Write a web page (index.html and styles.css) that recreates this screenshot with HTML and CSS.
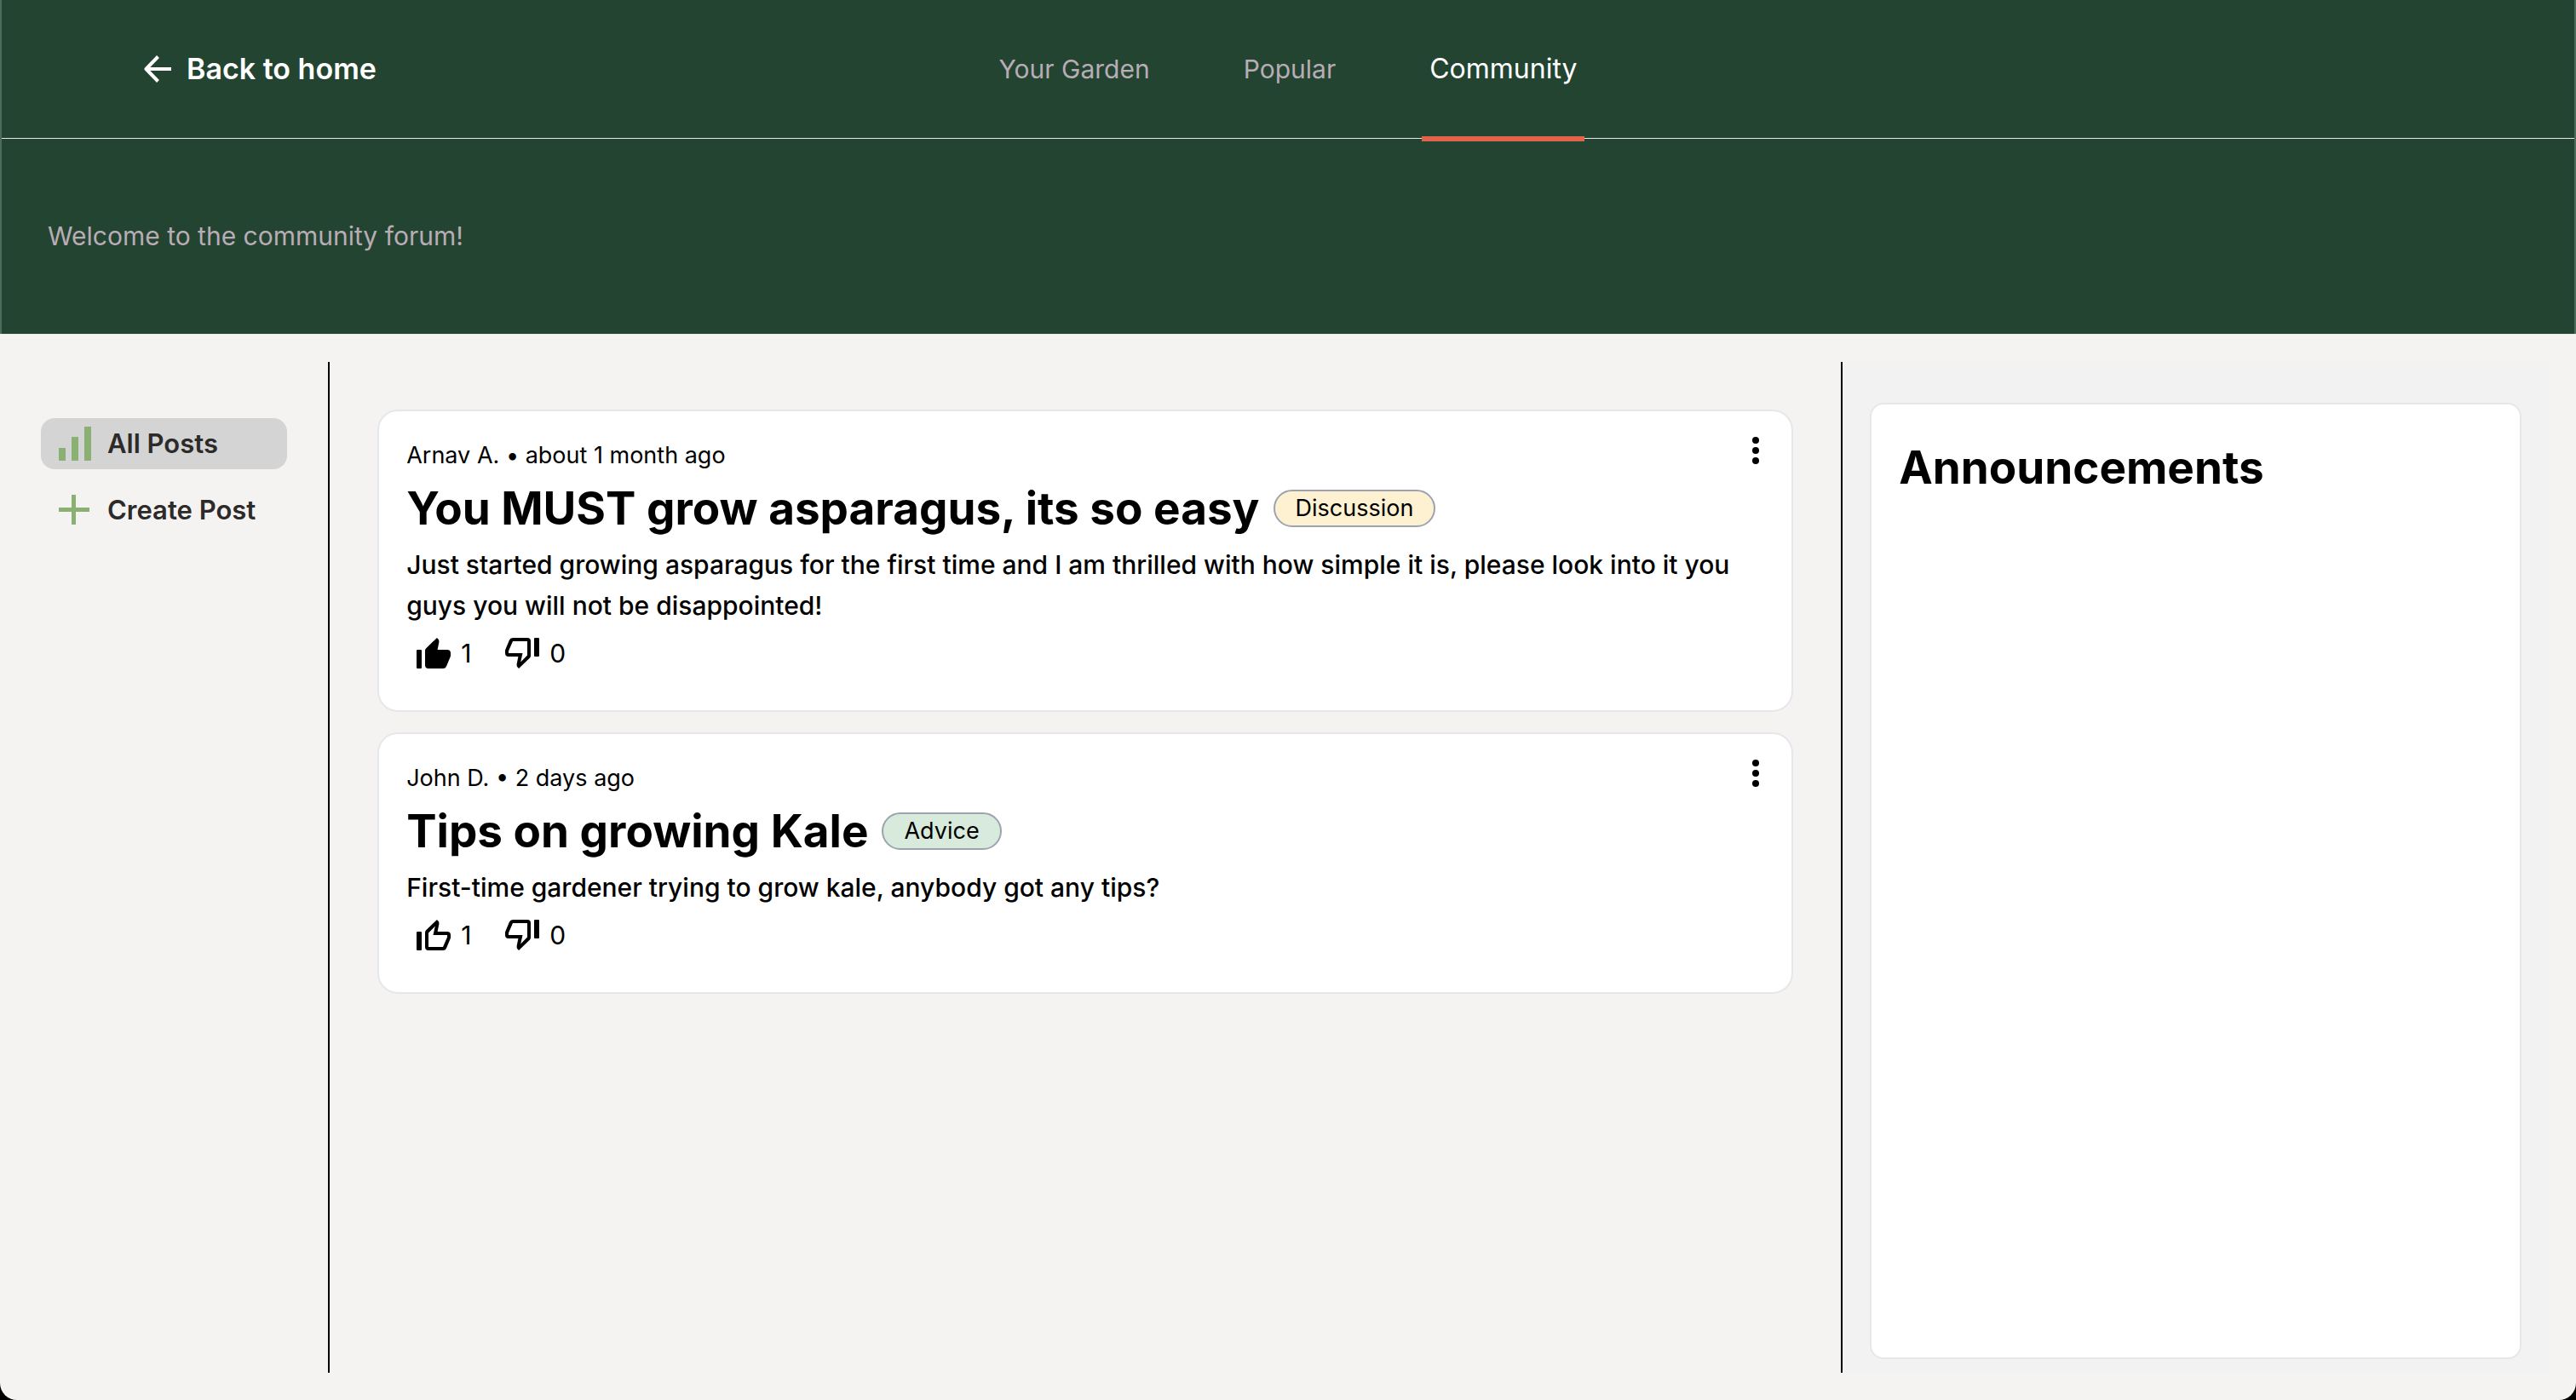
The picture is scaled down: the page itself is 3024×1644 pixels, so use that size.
FILE: index.html
```html
<!DOCTYPE html>
<html lang="en">
<head>
<meta charset="utf-8">
<meta name="viewport" content="width=device-width, initial-scale=1">
<title>Community</title>
<link rel="stylesheet" href="styles.css">
</head>
<body>
<svg class="sprite" aria-hidden="true">
  <symbol id="thumb" viewBox="0 0 40 36">
    <path d="M1 14H5Q6 14 6 15V35Q6 36 5 36H1Q0 36 0 35V15Q0 14 1 14Z"/>
    <path fill-rule="evenodd" d="M24 0L26 2.200Q26.600 3.500 26.300 5.500L24.600 14H36Q40 14 40 18V20.500Q40 21.500 39.600 22.500L35 33.500Q34 36 31 36H14Q10 36 10 32V15Q10 13.400 11.200 12.200ZM14 15.500V32H31L36 20.500V18H19.500L21.800 7.600Z"/>
  </symbol>
  <symbol id="thumb-filled" viewBox="0 0 40 36">
    <path d="M1 14H5Q6 14 6 15V35Q6 36 5 36H1Q0 36 0 35V15Q0 14 1 14Z"/>
    <path d="M24 0L26 2.200Q26.600 3.500 26.300 5.500L24.600 14H36Q40 14 40 18V20.500Q40 21.500 39.600 22.500L35 33.500Q34 36 31 36H14Q10 36 10 32V15Q10 13.400 11.200 12.200Z"/>
  </symbol>
  <symbol id="dots" viewBox="0 0 8 32">
    <circle cx="4" cy="4" r="4"/><circle cx="4" cy="16" r="4"/><circle cx="4" cy="28" r="4"/>
  </symbol>
</svg>

<header class="masthead">
  <div class="topbar">
    <a class="back" href="#home">
      <svg class="back-icon" viewBox="0 0 32 32" aria-hidden="true"><path d="M16.500 1.500L2.500 16L16.500 30.500M3 16H32"/></svg>
      Back to home
    </a>
    <nav class="tabs" aria-label="Main">
      <a class="tab" href="#garden">Your Garden</a>
      <a class="tab" href="#popular">Popular</a>
      <a class="tab tab-active" href="#community" aria-current="page">Community</a>
    </nav>
  </div>
  <p class="welcome">Welcome to the community forum!</p>
</header>

<div class="layout">
  <aside class="sidebar">
    <button class="side-button side-button-active" type="button">
      <svg class="side-icon" viewBox="0 0 40 40" aria-hidden="true"><path d="M1 25h8v15H1zM16 12h8v28h-8zM31 0h8v40h-8z"/></svg>
      All Posts
    </button>
    <button class="side-button" type="button">
      <svg class="side-icon" viewBox="0 0 40 40" aria-hidden="true"><path d="M16 2h5v15h16v5H21v15h-5V22H1v-5h15z"/></svg>
      Create Post
    </button>
  </aside>

  <main class="feed">
    <article class="post">
      <div class="post-meta">
        <span>Arnav A. • about 1 month ago</span>
        <button class="menu" type="button" aria-label="Post options"><svg class="menu-icon"><use href="#dots"/></svg></button>
      </div>
      <div class="post-heading">
        <h2 class="title">You MUST grow asparagus, its so easy</h2>
        <span class="tag tag-discussion">Discussion</span>
      </div>
      <p class="post-text">Just started growing asparagus for the first time and I am thrilled with how simple it is, please look into it you guys you will not be disappointed!</p>
      <div class="votes">
        <button class="vote" type="button" aria-label="Like"><svg class="vote-icon"><use href="#thumb-filled"/></svg><span class="count">1</span></button>
        <button class="vote" type="button" aria-label="Dislike"><svg class="vote-icon vote-icon-down"><use href="#thumb"/></svg><span class="count">0</span></button>
      </div>
    </article>

    <article class="post">
      <div class="post-meta">
        <span>John D. • 2 days ago</span>
        <button class="menu" type="button" aria-label="Post options"><svg class="menu-icon"><use href="#dots"/></svg></button>
      </div>
      <div class="post-heading">
        <h2 class="title">Tips on growing Kale</h2>
        <span class="tag tag-advice">Advice</span>
      </div>
      <p class="post-text">First-time gardener trying to grow kale, anybody got any tips?</p>
      <div class="votes">
        <button class="vote" type="button" aria-label="Like"><svg class="vote-icon"><use href="#thumb"/></svg><span class="count">1</span></button>
        <button class="vote" type="button" aria-label="Dislike"><svg class="vote-icon vote-icon-down"><use href="#thumb"/></svg><span class="count">0</span></button>
      </div>
    </article>
  </main>

  <aside class="news">
    <section class="news-card">
      <h2 class="title">Announcements</h2>
    </section>
  </aside>
</div>
</body>
</html>
```
FILE: styles.css
```css
* {
  box-sizing: border-box;
  margin: 0;
}

html {
  background: #000;
}

body {
  display: flex;
  flex-direction: column;
  min-height: 100vh;
  border-radius: 0 0 20px 20px;
  background: #f5f3f2;
  color: #000;
  font-family: Inter, "Liberation Sans", sans-serif;
  font-size: 30px;
  line-height: 48px;
}

a {
  color: inherit;
  text-decoration: none;
}

button {
  border: 0;
  padding: 0;
  background: none;
  color: inherit;
  font: inherit;
  cursor: pointer;
}

.sprite {
  display: none;
}

/* Header */

.masthead {
  border: solid #4f6b5b;
  border-width: 0 2px;
  background: #244432;
  color: #b8adb5;
}

.topbar {
  display: grid;
  grid-template-columns: 1fr auto 1fr;
  align-items: center;
  height: 163px;
  border-bottom: 1px solid #e5e7eb;
}

.back {
  display: flex;
  align-items: center;
  gap: 18px;
  padding-left: 167px;
  color: #fff;
  font-size: 34px;
  font-weight: 600;
}

.back-icon {
  width: 32px;
  height: 32px;
  fill: none;
  stroke: #fff;
  stroke-width: 4;
  stroke-linejoin: round;
}

.tabs {
  display: flex;
  align-self: stretch;
  gap: 92px;
}

.tab {
  display: flex;
  align-items: center;
  padding: 0 9px;
}

.tab-active {
  position: relative;
  color: #fff;
  font-size: 32px;
}

.tab-active::after {
  content: "";
  position: absolute;
  right: 0;
  bottom: -4px;
  left: 0;
  height: 6px;
  background: #e2634a;
}

.welcome {
  padding: 90px 54px 91px;
}

/* Three-column layout */

.layout {
  display: grid;
  flex: 1;
  grid-template-columns: 12fr 60fr 28fr;
  padding: 32px;
  border-top: 1px solid #ebebeb;
}

.sidebar {
  display: flex;
  flex-direction: column;
  gap: 18px;
  padding: 66px 48px 0 16px;
  border-right: 2px solid #000;
}

.side-button {
  display: flex;
  align-items: center;
  gap: 18px;
  height: 60px;
  padding: 0 20px;
  border-radius: 16px;
  color: #2c2b29;
  font-size: 31px;
  font-weight: 600;
  white-space: nowrap;
}

.side-button-active {
  background: #d4d4d4;
}

.side-icon {
  flex: none;
  width: 40px;
  height: 40px;
  fill: #8ab073;
}

/* Posts */

.feed {
  display: flex;
  flex-direction: column;
  gap: 24px;
  padding: 56px;
  border-right: 2px solid #000;
}

.post {
  display: flex;
  flex-direction: column;
  gap: 4px;
  padding: 32px 32px 43px;
  border: 2px solid #e5e7eb;
  border-radius: 24px;
  background: #fff;
}

.post-meta {
  display: flex;
  justify-content: space-between;
  font-size: 27px;
  line-height: 40px;
}

.menu {
  display: flex;
  align-items: center;
  justify-content: center;
  width: 20px;
  height: 28px;
}

.menu-icon {
  flex: none;
  width: 8px;
  height: 32px;
}

.post-heading {
  display: flex;
  align-items: center;
  gap: 16px;
}

.title {
  font-size: 53px;
  font-weight: 700;
  line-height: 76px;
}

.tag {
  padding: 0 24px;
  border: 2px solid #9ca3af;
  border-radius: 22px;
  font-size: 27px;
  line-height: 40px;
}

.tag-discussion {
  background: #fdf1d1;
}

.tag-advice {
  background: #d8eadc;
}

.post-text {
  font-weight: 500;
}

.votes {
  display: flex;
  gap: 32px;
  padding: 4px 12px 0;
}

.vote {
  display: flex;
  align-items: center;
  gap: 12px;
}

.vote-icon {
  width: 40px;
  height: 36px;
}

.vote-icon-down {
  transform: rotate(180deg);
}

.count {
  min-width: 20px;
  text-align: left;
}

/* Announcements */

.news {
  display: flex;
  padding: 48px 32px 16px;
  background: #f2f2f2;
}

.news-card {
  flex: 1;
  padding: 36px 32px;
  border: 2px solid #e5e7eb;
  border-radius: 16px;
  background: #fff;
}
```
